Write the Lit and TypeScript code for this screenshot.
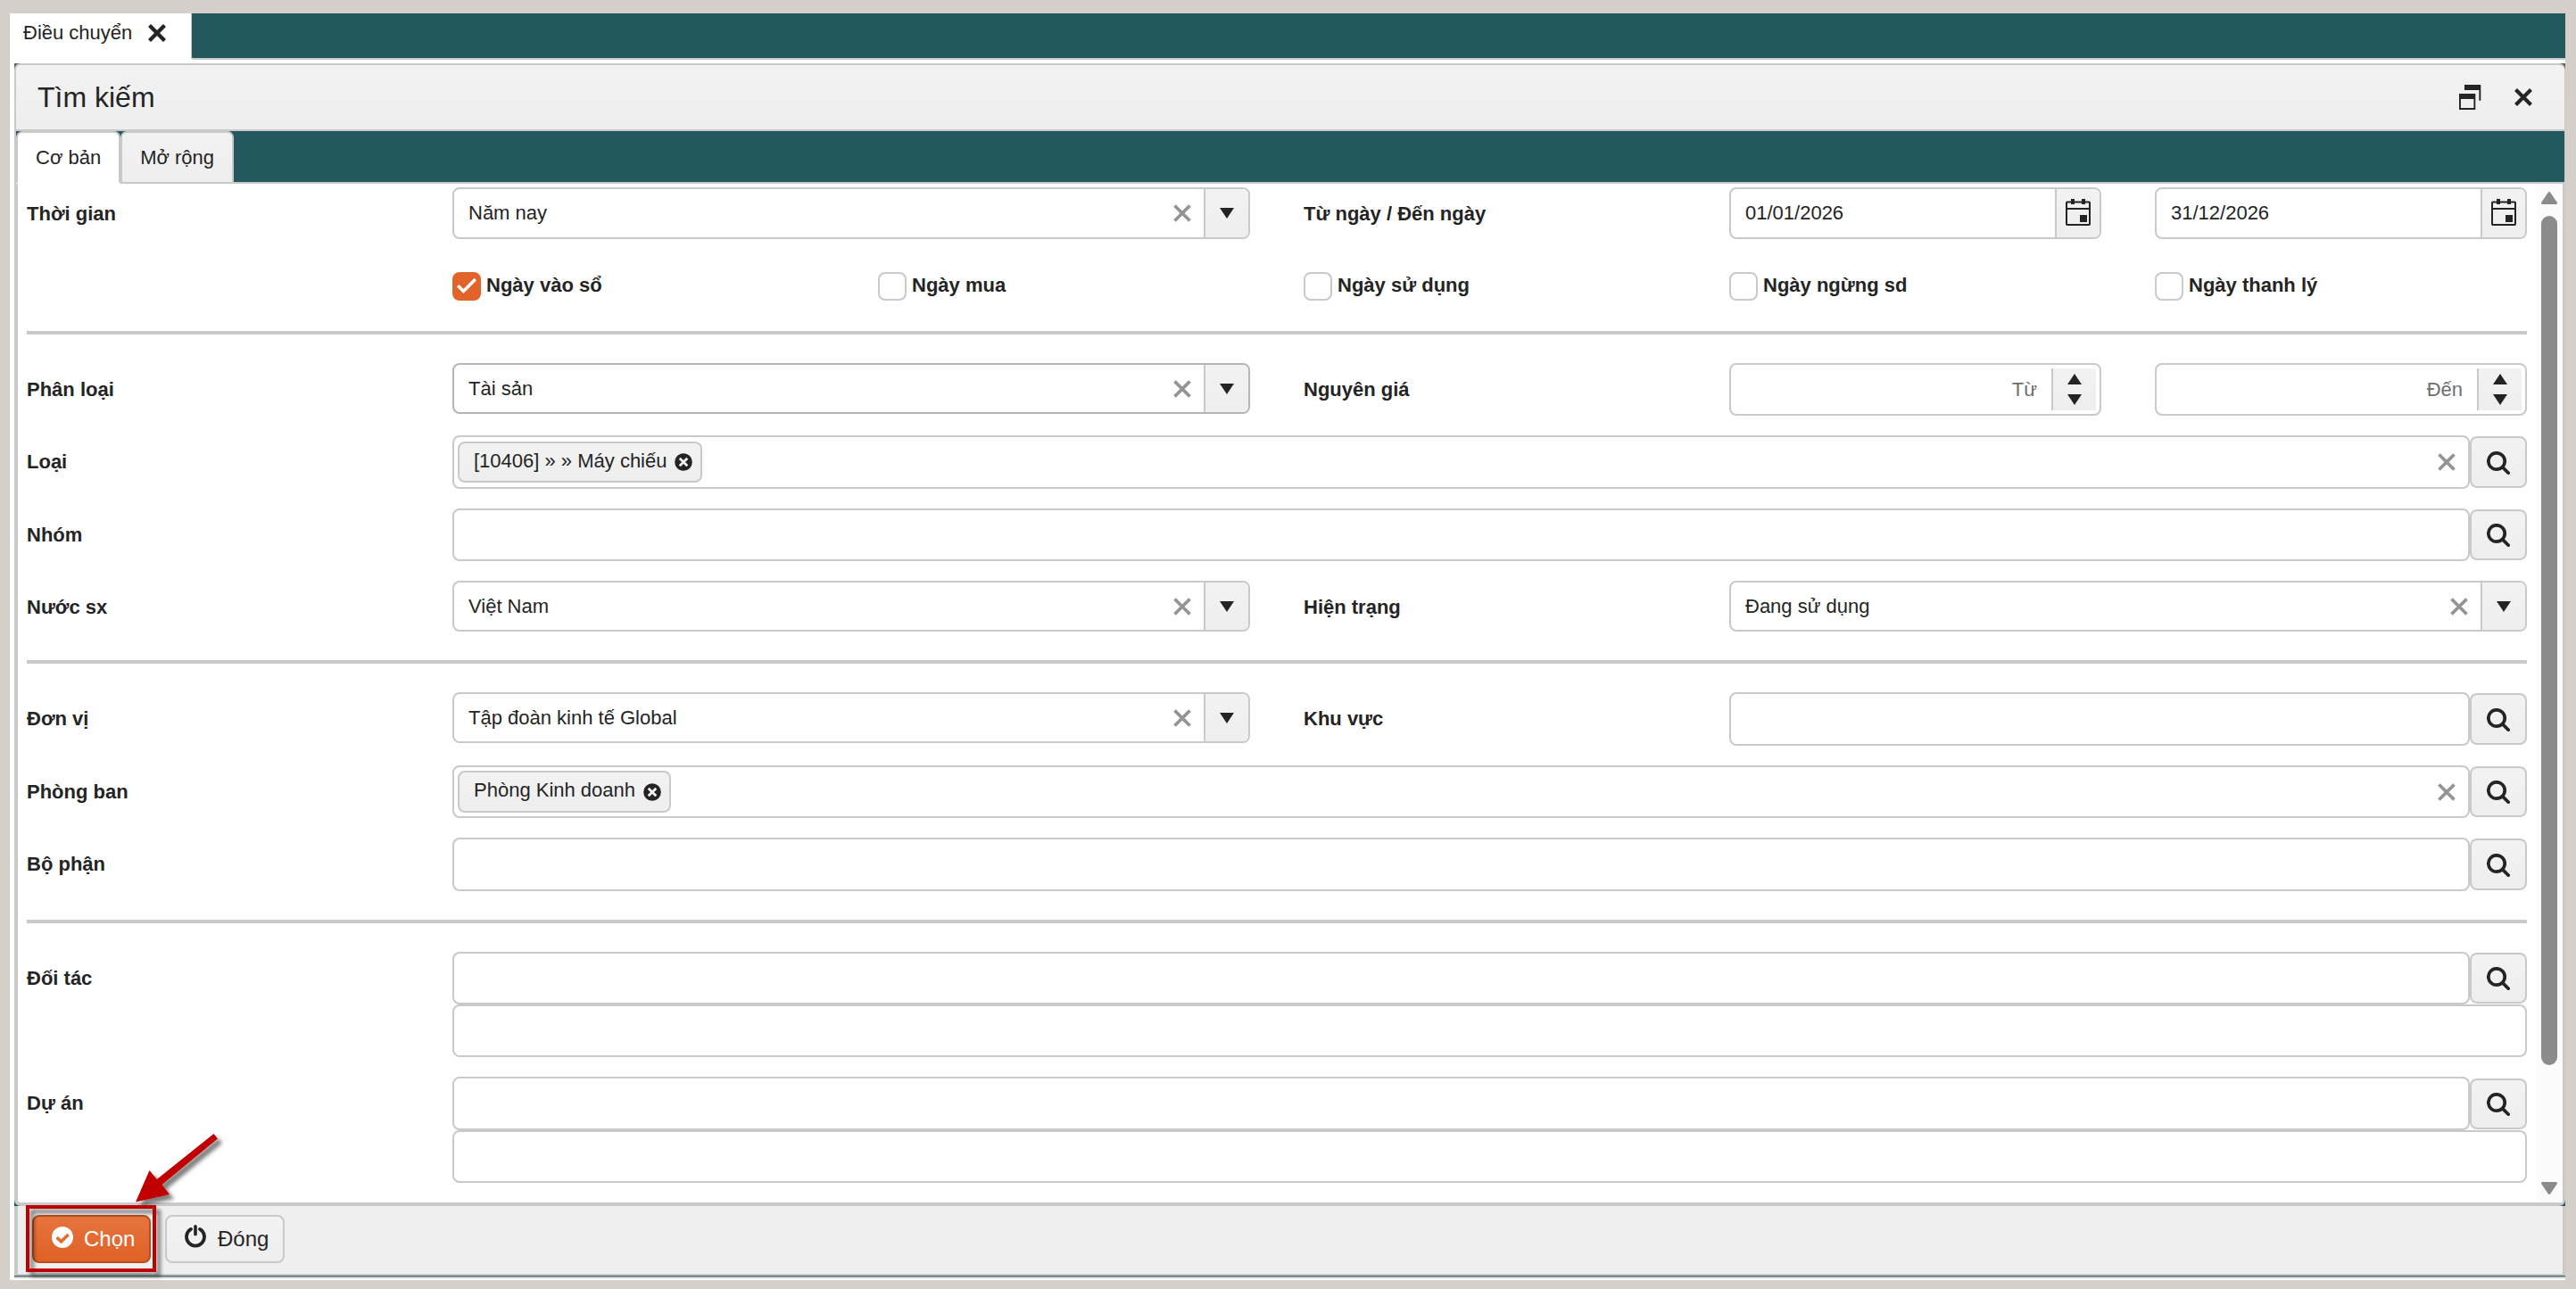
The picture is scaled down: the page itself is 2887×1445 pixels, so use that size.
import { LitElement, html, css, nothing, TemplateResult } from 'lit';
import { customElement } from 'lit/decorators.js';

/* ---------- icons ---------- */
const iconCross = (cls: string, w: number) => html`
  <svg class="cross ${cls}" viewBox="0 0 20 20">
    <path d="M1.500 1.500 18.500 18.500M18.500 1.500 1.500 18.500" fill="none" stroke="currentColor" stroke-width=${w} stroke-linecap="butt" />
  </svg>`;

const iconCaret = html`<svg class="caret" viewBox="0 0 16 12"><path d="M0 0H16L8 12Z" fill="currentColor" /></svg>`;
const iconCaretUp = html`<svg class="caret" viewBox="0 0 16 12"><path d="M0 12H16L8 0Z" fill="currentColor" /></svg>`;

const iconCalendar = html`
  <svg class="calendar" viewBox="0 0 28 30">
    <rect x="1" y="3.5" width="26" height="25.5" rx="0.8" fill="none" stroke="currentColor" stroke-width="2" />
    <path d="M1 11H27" stroke="currentColor" stroke-width="2" />
    <path d="M6 0h4v6h-4zM18 0h4v6h-4zM16 18h8v8h-8z" fill="currentColor" />
  </svg>`;

const iconSearch = html`
  <svg class="search" viewBox="0 0 26 26">
    <circle cx="11" cy="11" r="9.2" fill="none" stroke="currentColor" stroke-width="3.7" />
    <path d="M17.6 17.6 24.2 24.2" stroke="currentColor" stroke-width="3.7" stroke-linecap="round" />
  </svg>`;

const iconTagClose = html`
  <svg class="tag-close" viewBox="0 0 20 20">
    <circle cx="10" cy="10" r="9.8" fill="currentColor" />
    <path d="M5.700 5.700 14.300 14.300M14.300 5.700 5.700 14.300" stroke="#f2f2f2" stroke-width="2.8" />
  </svg>`;

const iconWindow = html`
  <svg class="window" viewBox="0 0 25 28">
    <path d="M0 10H18.3V28H0ZM1.9 16V26.1H16.4V16Z" fill="currentColor" fill-rule="evenodd" />
    <path d="M6 0H24.3V17.8H22.4V6H6Z" fill="currentColor" />
  </svg>`;

const iconOk = html`
  <svg class="ok" viewBox="0 0 24 24">
    <circle cx="12" cy="12" r="12" fill="#fff" />
    <path d="M5.6 12.2 10.6 16.8 18.6 9" fill="none" stroke="#e36a32" stroke-width="3.6" />
  </svg>`;

const iconPower = html`
  <svg class="power" viewBox="0 0 24 26">
    <path d="M7 4.9A10 10 0 1 0 17 4.9" fill="none" stroke="currentColor" stroke-width="3.8" stroke-linecap="round" />
    <path d="M12 1.9V10.8" stroke="currentColor" stroke-width="3.6" stroke-linecap="round" />
  </svg>`;

/* ---------- controls ---------- */
const label = (text: string, col = '') => html`<div class="label ${col}">${text}</div>`;

const combo = (value: string, col: string, extra = '') => html`
  <div class="field combo ${col} ${extra}">
    <span class="value">${value}</span>
    ${iconCross('grey', 3.8)}
    <span class="addon">${iconCaret}</span>
  </div>`;

const dateBox = (value: string, col: string) => html`
  <div class="field date ${col}">
    <span class="value">${value}</span>
    <span class="addon">${iconCalendar}</span>
  </div>`;

const spin = (hint: string, col: string) => html`
  <div class="field spin ${col}">
    <span class="hint">${hint}</span>
    <span class="arrows">${iconCaretUp}${iconCaret}</span>
  </div>`;

const lookup = (col: string, opts: { tag?: string; extra?: string; detail?: boolean } = {}) => html`
  <div class="lookup-group ${col} ${opts.extra ?? ''}">
    <div class="lookup">
      <div class="field text">
        ${opts.tag
          ? html`<span class="tag">${opts.tag}${iconTagClose}</span><span class="fill"></span>${iconCross('grey', 3.8)}`
          : nothing}
      </div>
      <button class="find" type="button">${iconSearch}</button>
    </div>
    ${opts.detail ? html`<div class="field detail"></div>` : nothing}
  </div>`;

const check = (text: string, on: boolean, col: string) => html`
  <div class="check ${col}">
    <span class="box ${on ? 'on' : ''}">
      ${on
        ? html`<svg viewBox="0 0 32 32"><path d="M6.2 15.2 12.4 21.4 25.8 8" fill="none" stroke="#fff" stroke-width="3.6" /></svg>`
        : nothing}
    </span>
    <span class="check-label">${text}</span>
  </div>`;

@customElement('app-root')
export class AppRoot extends LitElement {
  static styles = css`
    :host {
      display: block;
      --line: #c9c9c9;
      --teal: #23595e;
      --ink: #242424;
    }
    * { box-sizing: border-box; }
    svg { display: block; flex: none; }
    .screen {
      position: relative;
      width: 2887px;
      height: 1445px;
      padding: 15px 12px 10px 11px;
      background: #d4cfc8;
      color: var(--ink);
      font: 22px/25px "Liberation Sans", Arial, sans-serif;
      overflow: hidden;
    }
    .shell {
      display: flex;
      flex-direction: column;
      height: 1420px;
      padding-bottom: 2px;
      background: #fff;
    }
    .top-bar {
      display: flex;
      height: 52px;
      margin-bottom: 4px;
    }
    .top-tab {
      display: flex;
      align-items: flex-start;
      width: 203px;
      padding: 0 0 0 15px;
      line-height: 43px;
      white-space: nowrap;
    }
    .top-tab .cross { width: 20px; height: 20px; margin: 12px 0 0 18px; }
    .top-fill {
      flex: 1;
      background: var(--teal);
      border: solid var(--line);
      border-width: 0 0 2px 1px;
      border-bottom-left-radius: 3px;
    }
    .dialog {
      display: flex;
      flex-direction: column;
      flex: 1;
      min-height: 0;
      margin-left: 5px;
      background: #5e5f5f;
    }
    .head {
      display: flex;
      align-items: center;
      height: 76px;
      padding: 0 36px 0 24px;
      border: 2px solid var(--line);
      border-right-width: 1px;
      border-radius: 7px 7px 0 0;
      background: linear-gradient(#f2f2f2, #eeeeee);
    }
    .title { flex: 1; font-size: 32px; line-height: 72px; }
    .window { width: 25px; height: 28px; margin-right: 37px; }
    .head .cross { width: 20px; height: 20px; }
    .strip {
      display: flex;
      height: 59px;
      border: solid var(--line);
      border-width: 0 1px 0 2px;
      background: var(--teal);
    }
    .tab {
      padding: 0 20px;
      border: 2px solid var(--line);
      border-radius: 7px 7px 0 0;
      background: linear-gradient(#f2f2f2, #eeeeee);
      line-height: 55px;
      white-space: nowrap;
    }
    .tab.active { background: #fff; border-bottom-color: #fff; }
    .strip-fill { flex: 1; border-bottom: 2px solid var(--line); }
    .body-wrap { height: 1146px; background: var(--teal); }
    .body {
      display: flex;
      height: 1146px;
      border: solid var(--line);
      border-width: 0 3px 4px 4px;
      border-radius: 0 0 7px 7px;
      background: #fff;
    }
    .form { flex: 1; padding: 4px 10px 0; }
    .scroll {
      display: flex;
      flex-direction: column;
      align-items: center;
      width: 30px;
      padding: 9px 0;
      background: #fbfbfb;
    }
    .scroll svg { width: 18px; height: 14px; }
    .thumb { width: 18px; height: 952px; margin-top: 13px; border-radius: 9px; background: #8b8b8b; }
    .track { flex: 1; }

    .section {
      display: grid;
      grid-template-columns: repeat(6, 417px);
      column-gap: 60px;
      align-items: start;
    }
    .s1 { grid-template-rows: 95px 66px; }
    .s2 { grid-template-rows: 81px 82px 81px 89px; }
    .s3 { grid-template-rows: 82px 81px 92px; }
    .s4 { grid-template-rows: 140px 120px; }
    .rule { height: 4px; margin-bottom: 32px; background: var(--line); }

    .label { grid-column: 1; font-weight: 700; line-height: 59px; white-space: nowrap; }
    .c2 { grid-column: 2; }
    .c3 { grid-column: 3; }
    .c4 { grid-column: 4; }
    .c5 { grid-column: 5; }
    .c6 { grid-column: 6; }
    .c23 { grid-column: 2 / 4; }
    .c56 { grid-column: 5 / 7; }
    .c26 { grid-column: 2 / 7; }

    .field {
      display: flex;
      align-items: center;
      border: 2px solid var(--line);
      border-radius: 8px;
      background: #fff;
      overflow: hidden;
    }
    .value { flex: 1; padding-left: 16px; white-space: nowrap; }
    .combo { height: 57px; }
    .date, .combo.tall { height: 58px; }
    .combo.focus { border-color: #b5b5b5; }
    .combo .value, .date .value { line-height: 52px; }
    .cross { width: 20px; height: 20px; }
    .grey { color: #949494; }
    .combo .cross { margin-right: 14px; }
    .addon {
      display: flex;
      align-items: center;
      justify-content: center;
      align-self: stretch;
      width: 50px;
      border-left: 2px solid var(--line);
      background: linear-gradient(#f2f2f2, #eeeeee);
    }
    .caret { width: 16px; height: 12px; }
    .calendar { width: 28px; height: 30px; margin-right: 1px; margin-bottom: 2px; }
    .spin { height: 59px; padding-right: 4px; }
    .hint { flex: 1; text-align: right; color: #6f6f6f; padding-right: 16px; line-height: 52px; }
    .arrows {
      display: flex;
      flex-direction: column;
      align-items: center;
      justify-content: center;
      gap: 11px;
      width: 50px;
      height: 47px;
      border-left: 2px solid var(--line);
      background: linear-gradient(#f2f2f2, #eeeeee);
    }
    .lookup { display: flex; align-items: flex-start; }
    .text { flex: 1; height: 60px; padding-right: 14px; padding-left: 4px; }
    .n59 .text { height: 59px; }
    .find {
      display: flex;
      width: 64px;
      height: 58px;
      margin-top: 1px;
      padding: 15px 0 0 17px;
      border: 2px solid var(--line);
      border-radius: 8px;
      background: linear-gradient(#f2f2f2, #eeeeee);
      color: var(--ink);
    }
    .n59 .find, .n57 .find { height: 57px; }
    .n59 .find { padding-top: 14px; }
    .n57 .find { margin-top: 2px; padding-top: 14px; }
    .search { width: 26px; height: 26px; }
    .detail { height: 59px; }
    .tag {
      display: flex;
      align-items: center;
      height: 46px;
      padding: 0 9px 3px 16px;
      gap: 9px;
      border: 2px solid var(--line);
      border-radius: 8px;
      background: linear-gradient(#f2f2f2, #eeeeee);
      line-height: 42px;
      white-space: nowrap;
    }
    .n59 .tag { height: 47px; }
    .tag-close { width: 20px; height: 20px; margin-top: 3px; }
    .fill { flex: 1; }

    .check { display: flex; gap: 6px; }
    .box { width: 32px; height: 32px; border: 2px solid var(--line); border-radius: 8px; background: #fff; }
    .box.on { border: 0; background: #e26329; }
    .box svg { width: 32px; height: 32px; }
    .check-label { font-weight: 700; line-height: 29px; white-space: nowrap; }

    .foot {
      display: flex;
      gap: 16px;
      height: 78px;
      padding: 10px 16px;
      border: solid var(--line);
      border-width: 0 3px 2px 4px;
      background: #efefef;
    }
    .foot-line { height: 3px; border-top: 1px solid var(--teal); background: var(--line); }
    .btn {
      display: flex;
      width: 134px;
      height: 54px;
      padding: 0 0 0 20px;
      border: 2px solid var(--line);
      border-radius: 8px;
      background: linear-gradient(#f2f2f2, #eeeeee);
      color: var(--ink);
      font: 24px/50px "Liberation Sans", Arial, sans-serif;
      white-space: nowrap;
    }
    .btn.primary { width: 133px; border-color: #b54e21; background: linear-gradient(#e6743e, #e06126); color: #fff; }
    .ok { width: 24px; height: 24px; margin: 11px 12px 0 0; }
    .power { width: 24px; height: 26px; margin: 9px 13px 0 0; }
    .callout { position: absolute; left: 0; top: 1240px; width: 300px; height: 205px; }
  `;

  private section(cls: string, content: TemplateResult) {
    return html`<div class="section ${cls}">${content}</div>`;
  }

  render() {
    return html`
      <div class="screen">
        <div class="shell">
          <div class="top-bar">
            <div class="top-tab">Điều chuyển${iconCross('', 4.4)}</div>
            <div class="top-fill"></div>
          </div>
          <div class="dialog">
            <div class="head">
              <div class="title">Tìm kiếm</div>
              ${iconWindow}${iconCross('', 4.2)}
            </div>
            <div class="strip">
              <div class="tab active">Cơ bản</div>
              <div class="tab">Mở rộng</div>
              <div class="strip-fill"></div>
            </div>
            <div class="body-wrap">
              <div class="body">
                <div class="form">
                  ${this.section('s1', html`
                    ${label('Thời gian')}${combo('Năm nay', 'c23', 'tall')}
                    ${label('Từ ngày / Đến ngày', 'c4')}${dateBox('01/01/2026', 'c5')}${dateBox('31/12/2026', 'c6')}
                    ${check('Ngày vào sổ', true, 'c2')}${check('Ngày mua', false, 'c3')}
                    ${check('Ngày sử dụng', false, 'c4')}${check('Ngày ngừng sd', false, 'c5')}
                    ${check('Ngày thanh lý', false, 'c6')}`)}
                  <div class="rule"></div>
                  ${this.section('s2', html`
                    ${label('Phân loại')}${combo('Tài sản', 'c23', 'focus')}
                    ${label('Nguyên giá', 'c4')}${spin('Từ', 'c5')}${spin('Đến', 'c6')}
                    ${label('Loại')}${lookup('c26', { tag: '[10406] » » Máy chiếu' })}
                    ${label('Nhóm')}${lookup('c26', { extra: 'n59' })}
                    ${label('Nước sx')}${combo('Việt Nam', 'c23')}
                    ${label('Hiện trạng', 'c4')}${combo('Đang sử dụng', 'c56')}`)}
                  <div class="rule"></div>
                  ${this.section('s3', html`
                    ${label('Đơn vị')}${combo('Tập đoàn kinh tế Global', 'c23')}
                    ${label('Khu vực', 'c4')}${lookup('c56')}
                    ${label('Phòng ban')}${lookup('c26', { tag: 'Phòng Kinh doanh', extra: 'n59' })}
                    ${label('Bộ phận')}${lookup('c26')}`)}
                  <div class="rule"></div>
                  ${this.section('s4', html`
                    ${label('Đối tác')}${lookup('c26', { extra: 'n59', detail: true })}
                    ${label('Dự án')}${lookup('c26', { extra: 'n57', detail: true })}`)}
                </div>
                <div class="scroll">
                  <svg viewBox="0 0 18 14"><path d="M9 1.5 16.5 12.5H1.5Z" fill="#8b8b8b" stroke="#8b8b8b" stroke-width="3" stroke-linejoin="round" /></svg>
                  <div class="thumb"></div>
                  <div class="track"></div>
                  <svg viewBox="0 0 18 14"><path d="M1.5 1.5H16.5L9 12.5Z" fill="#8b8b8b" stroke="#8b8b8b" stroke-width="3" stroke-linejoin="round" /></svg>
                </div>
              </div>
            </div>
            <div class="foot">
              <button class="btn primary" type="button">${iconOk}Chọn</button>
              <button class="btn" type="button">${iconPower}Đóng</button>
            </div>
            <div class="foot-line"></div>
          </div>
        </div>
        <svg class="callout" viewBox="0 0 300 205">
          <defs>
            <filter id="shade" x="-20%" y="-20%" width="150%" height="150%">
              <feDropShadow dx="5" dy="5" stdDeviation="2" flood-color="#000" flood-opacity="0.5" />
            </filter>
          </defs>
          <g filter="url(#shade)">
            <rect x="31" y="113" width="142" height="71" fill="none" stroke="#c00000" stroke-width="4" />
            <path d="M152 107.500 167.500 72 175.800 82 239.500 31 244 36.500 181.500 88 190 99Z" fill="#c00000" />
          </g>
        </svg>
      </div>`;
  }
}
